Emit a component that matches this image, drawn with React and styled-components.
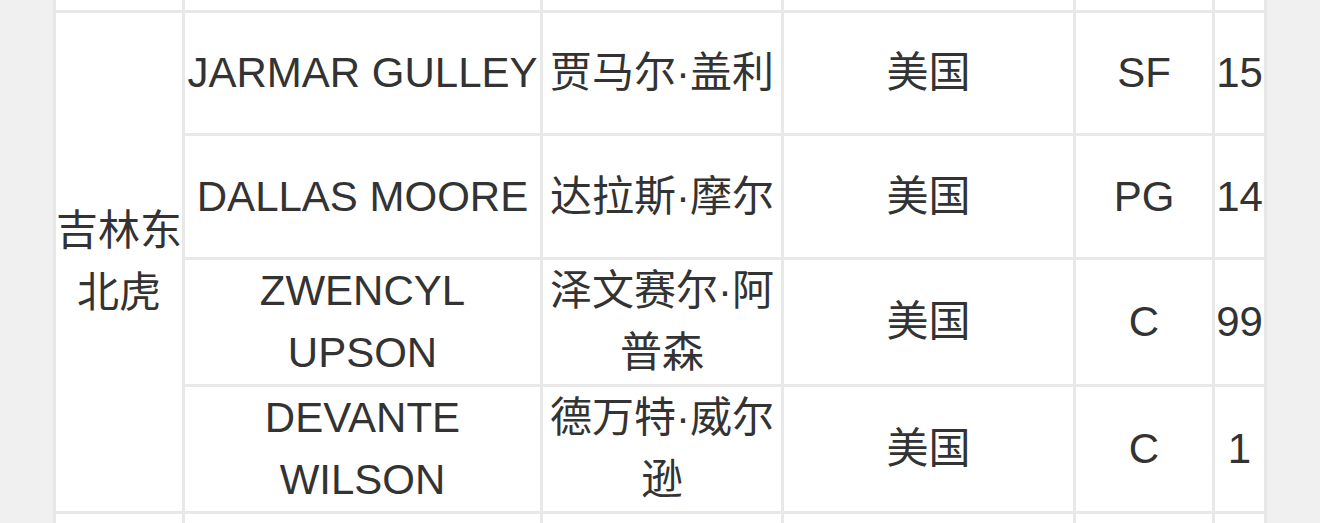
import React from "react";
import styled, { createGlobalStyle } from "styled-components";

const GlobalStyle = createGlobalStyle`
  html, body {
    margin: 0;
    padding: 0;
    background: #f0f0f0;
  }
`;

const LINE = "#e8e8e8";

const Page = styled.div`
  height: 523px;
  overflow: hidden;
  background: #f0f0f0;
  font-family: "Liberation Sans", "Noto Sans CJK SC", sans-serif;
`;

const Table = styled.table`
  box-sizing: border-box;
  width: 1214px;
  margin: 0 auto;
  table-layout: fixed;
  border-collapse: separate;
  border-spacing: 0;
  border-left: 3px solid ${LINE};
  background: #fff;
`;

const Cell = styled.td`
  box-sizing: border-box;
  width: ${props => (props.$w ? `${props.$w}px` : "auto")};
  height: ${props => props.$h}px;
  padding: 0;
  border-right: 3px solid ${LINE};
  border-bottom: 3px solid ${LINE};
  text-align: center;
  vertical-align: middle;
  font-size: 42px;
  line-height: 62px;
  color: #333;
`;

const widths = [129, 358, 241, 292, 139, 52];

const team = {
  name: "吉林东北虎",
  players: [
    { en: "JARMAR GULLEY", cn: "贾马尔·盖利", country: "美国", pos: "SF", num: "15" },
    { en: "DALLAS MOORE", cn: "达拉斯·摩尔", country: "美国", pos: "PG", num: "14" },
    { en: "ZWENCYL UPSON", cn: "泽文赛尔·阿普森", country: "美国", pos: "C", num: "99" },
    { en: "DEVANTE WILSON", cn: "德万特·威尔逊", country: "美国", pos: "C", num: "1" }
  ]
};

const rowHeights = [123, 124, 124, 124];

function EdgeRow({ height, sized }) {
  return (
    <tr>
      {widths.map((w, i) => (
        <Cell key={i} $w={sized ? w : null} $h={height} />
      ))}
    </tr>
  );
}

export default function App() {
  return (
    <Page>
      <GlobalStyle />
      <Table>
        <tbody>
          <EdgeRow height={13} sized />
          {team.players.map((p, i) => (
            <tr key={p.en}>
              {i === 0 && (
                <Cell rowSpan={team.players.length}>{team.name}</Cell>
              )}
              <Cell $h={rowHeights[i]}>{p.en}</Cell>
              <Cell $h={rowHeights[i]}>{p.cn}</Cell>
              <Cell $h={rowHeights[i]}>{p.country}</Cell>
              <Cell $h={rowHeights[i]}>{p.pos}</Cell>
              <Cell $h={rowHeights[i]}>{p.num}</Cell>
            </tr>
          ))}
          <EdgeRow height={124} />
        </tbody>
      </Table>
    </Page>
  );
}
